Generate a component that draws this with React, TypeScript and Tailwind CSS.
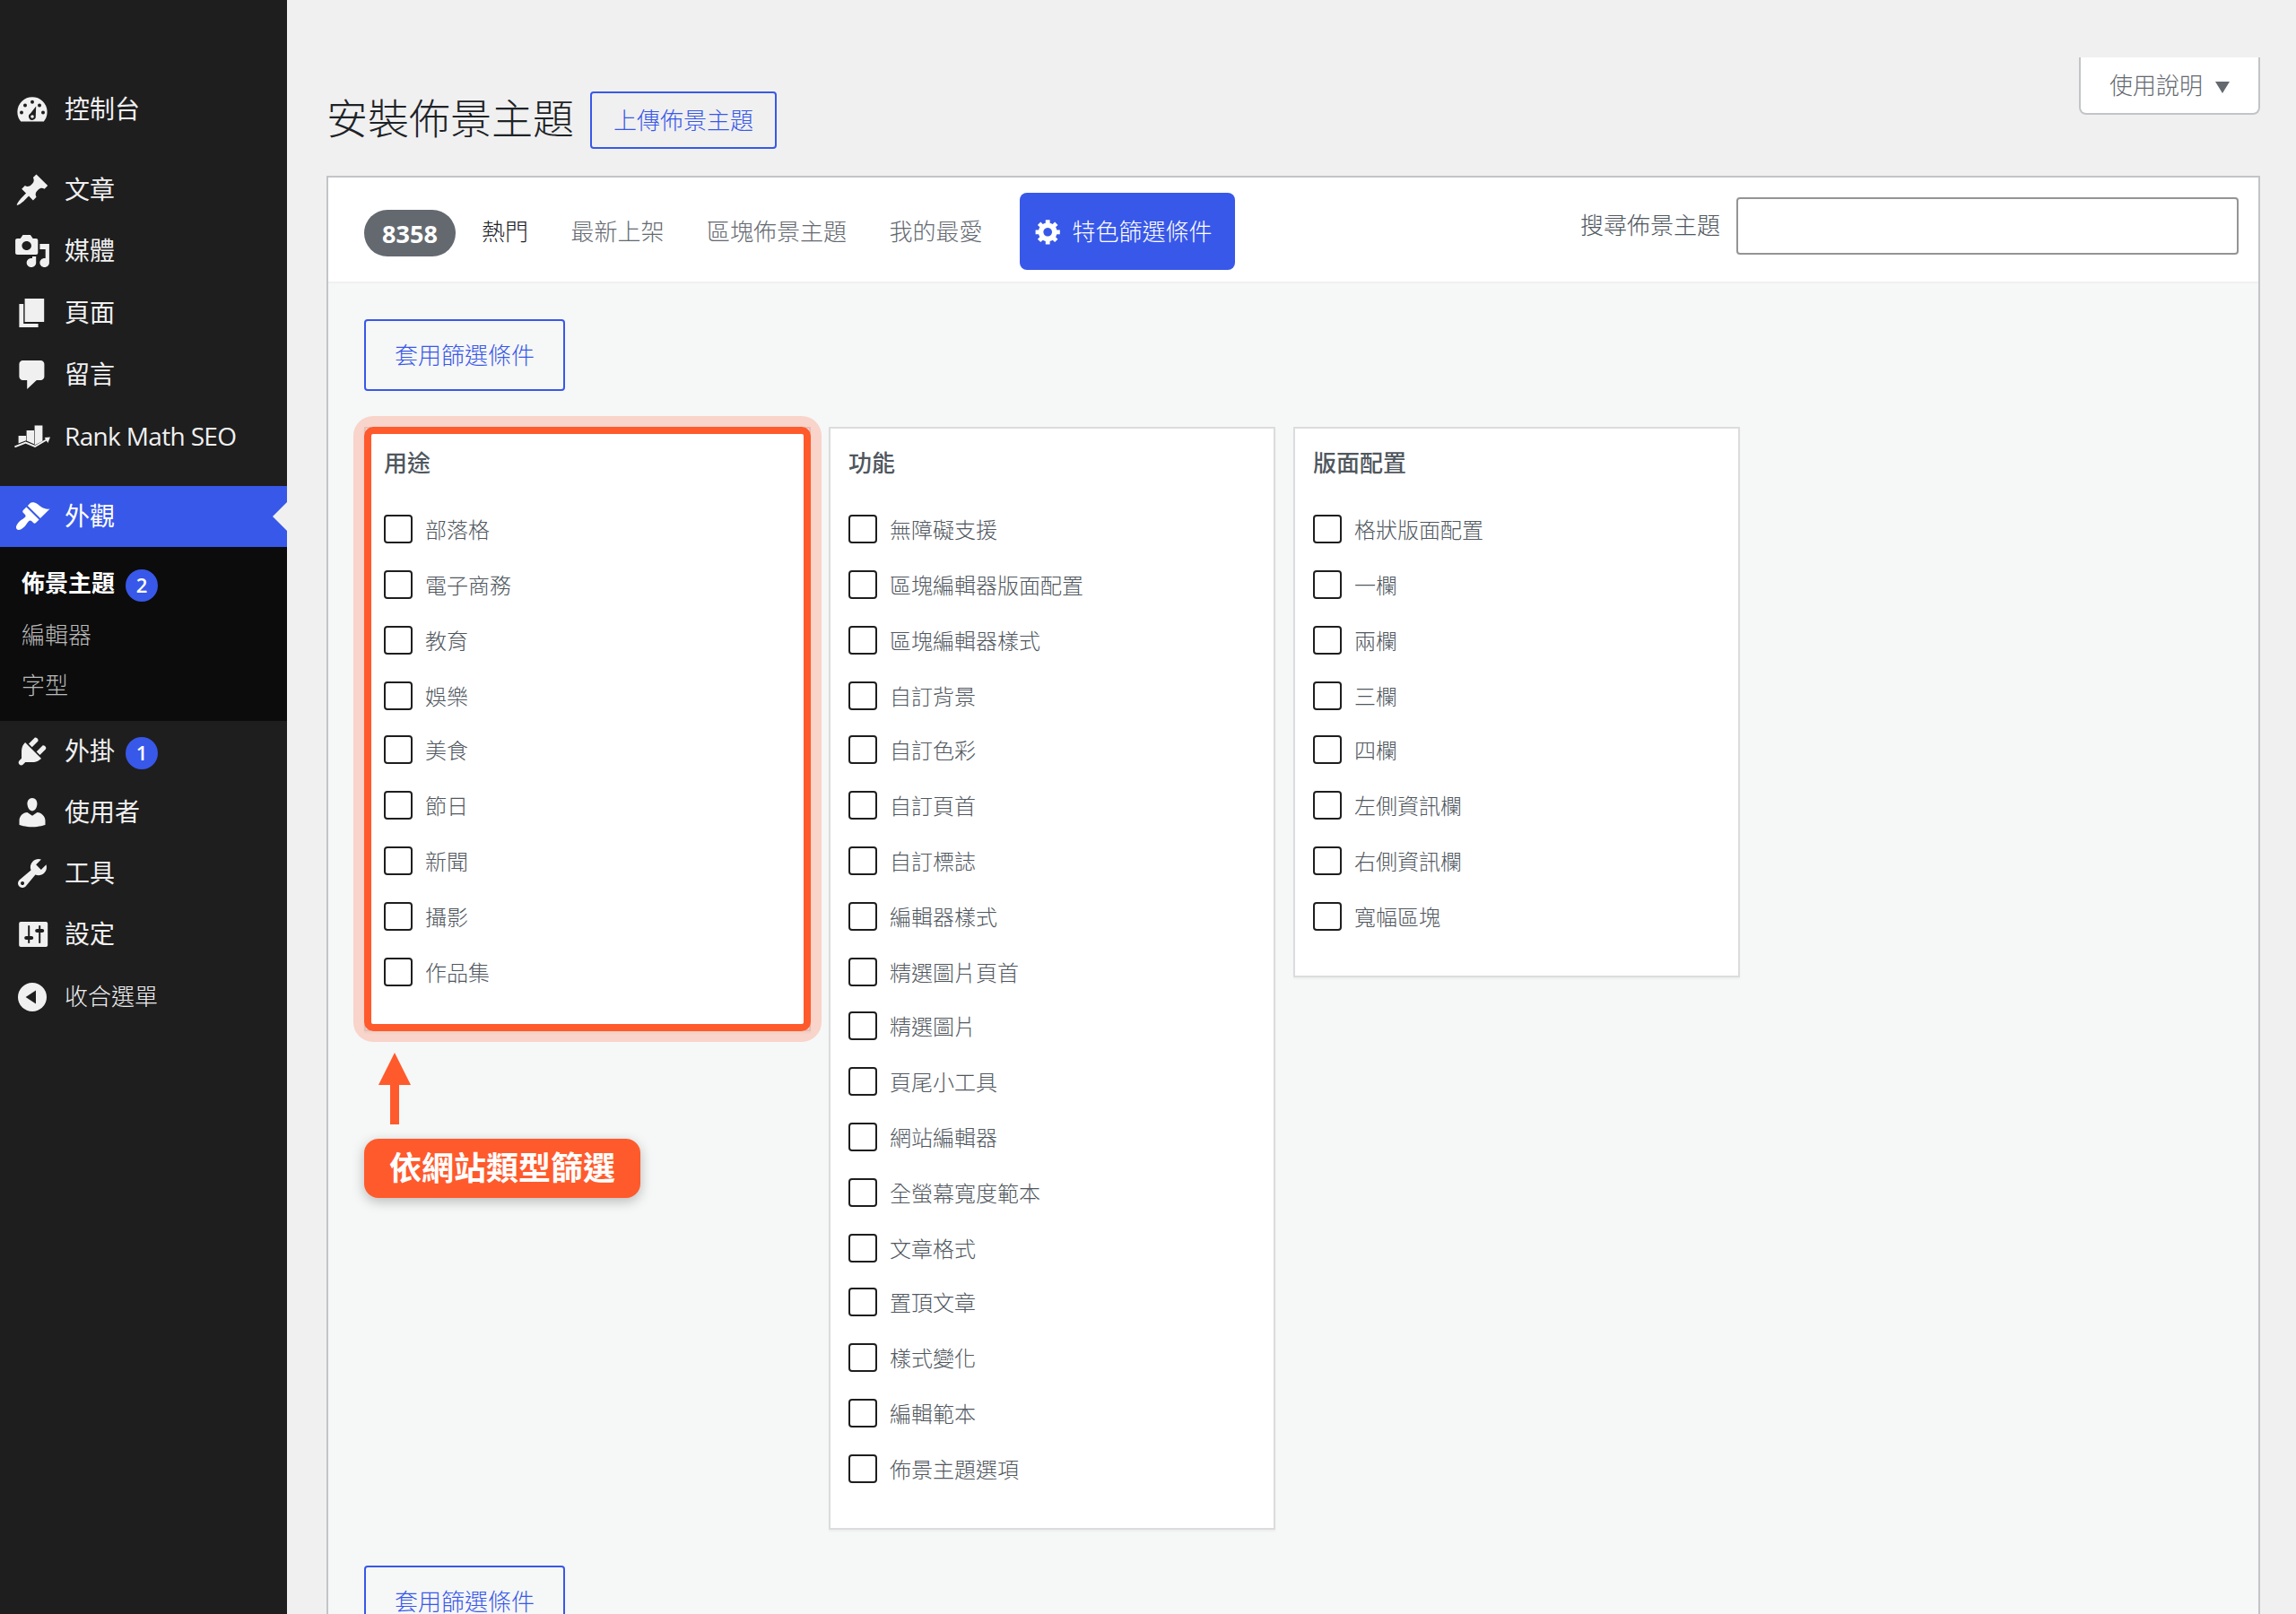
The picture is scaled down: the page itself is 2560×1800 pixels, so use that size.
import React from 'react';

const FONT = "font-['Open_Sans','Noto_Sans_CJK_TC',sans-serif]";

const icons: Record<string, React.ReactNode> = {
  dashboard: (
    <>
      <path d="M3.6 16.8h12.8A8.3 8.3 0 1 0 3.6 16.8z" transform="translate(0 -.1)" />
      <g fill="#1e1e1e">
        <circle cx="10" cy="5.9" r="1" />
        <circle cx="6" cy="7.8" r="1" />
        <circle cx="14" cy="7.8" r="1" />
        <circle cx="4" cy="11.8" r="1" />
        <circle cx="16" cy="11.8" r="1" />
        <path d="M12.1 8.2l-.2 5.6a1.95 1.95 0 1 1-2.9-1.5z" />
      </g>
      <circle cx="10" cy="14" r=".9" />
    </>
  ),
  posts: (
    <path d="M10.44 3.02l1.82-1.82 6.36 6.35-1.83 1.82c-1.05-.68-2.48-.57-3.41.36l-.75.75c-.92.93-1.04 2.35-.35 3.41l-1.83 1.82-2.41-2.41-2.8 2.79c-.42.42-3.38 2.71-3.8 2.29s1.86-3.39 2.28-3.81l2.79-2.79L4.1 9.36l1.83-1.82c1.05.69 2.48.57 3.4-.36l.75-.75c.93-.92 1.05-2.35.36-3.41z" />
  ),
  media: (
    <path
      transform="translate(-.5 0) scale(1.05 1)"
      d="M13 11V4c0-.55-.45-1-1-1h-1.67L9 1H5L3.67 3H2c-.55 0-1 .45-1 1v7c0 .55.45 1 1 1h10c.55 0 1-.45 1-1zM7 4.5c1.38 0 2.5 1.12 2.5 2.5S8.38 9.5 7 9.5 4.5 8.38 4.5 7 5.62 4.5 7 4.5zM14 6h5v10.5c0 1.38-1.12 2.5-2.5 2.5S14 17.88 14 16.5s1.12-2.5 2.5-2.5c.17 0 .34.02.5.05V9h-3V6zm-4 8.05V13h2v3.5c0 1.38-1.12 2.5-2.5 2.5S7 17.88 7 16.5 8.12 14 9.5 14c.17 0 .34.02.5.05z"
    />
  ),
  pages: <path d="M5.8 2h10.8v13H5.8zM2.7 5h2.4v11h8.2v2H2.7z" />,
  comments: (
    <path d="M4.7 2h10c1.1 0 2 .9 2 2v7c0 1.1-.9 2-2 2h-2.3l-5.3 5v-5H4.7c-1.1 0-2-.9-2-2V4c0-1.1.9-2 2-2z" />
  ),
  rankmath: (
    <>
      <path d="M2.3 9.5h4.2v2.6l-4.2 1.6zM6.8 6.5H11v7.6l-4.2-1.9zM11.3 3.7h4.4v8.8l-4.4 2.2z" />
      <path d="M.2 15.7l6.1-2.4 5.2 2.2 6.8-4" fill="none" stroke="currentColor" strokeWidth="1" />
      <path d="M20 10.3l-3.2.2 1.9 3z" />
    </>
  ),
  appearance: (
    <path d="M14.48 11.06L7.41 3.99l1.5-1.5c.5-.56 2.3-.47 3.51.32 1.21.8 1.43 1.28 2.91 2.1 1.18.64 2.45 1.26 4.45.85zm-.71.71L6.7 4.7 4.93 6.47c-.39.39-.39 1.02 0 1.41l1.06 1.06c.39.39.39 1.03 0 1.42-.6.6-1.43 1.11-2.21 1.69-.35.26-.7.53-1.01.84C1.43 14.23.4 16.08 1.4 17.07c.99 1 2.84-.03 4.18-1.36.31-.31.58-.66.85-1.02.57-.78 1.08-1.61 1.69-2.21.39-.39 1.02-.39 1.41 0l1.06 1.06c.39.39 1.02.39 1.41 0z" />
  ),
  plugins: (
    <path d="M13.11 4.36L9.87 7.6 8 5.73l3.24-3.24c.35-.34 1.05-.2 1.56.32.52.51.66 1.21.31 1.55zm-8 1.77l.91-1.12 9.01 9.01-1.19.84c-.71.71-2.63 1.16-3.82 1.16H6.14L4.9 17.26c-.59.59-1.54.59-2.12 0-.59-.58-.59-1.53 0-2.12l1.24-1.24v-3.88c0-1.13.4-3.19 1.09-3.89zm7.26 3.97l3.24-3.24c.34-.35 1.04-.21 1.55.31.52.51.66 1.21.31 1.55l-3.24 3.25z" />
  ),
  users: (
    <path d="M10 9.25c-2.27 0-2.73-3.44-2.73-3.44C7 4.02 7.82 2 9.97 2c2.16 0 2.98 2.02 2.71 3.81 0 0-.41 3.44-2.68 3.44zm0 2.57L12.72 10c2.39 0 4.52 2.33 4.52 4.53v2.49s-3.65 1.13-7.24 1.13c-3.65 0-7.24-1.13-7.24-1.13v-2.49c0-2.25 1.94-4.48 4.47-4.48z" />
  ),
  tools: (
    <path d="M16.68 9.77c-1.34 1.34-3.3 1.67-4.95.99l-5.41 6.52c-.99.99-2.59.99-3.58 0s-.99-2.59 0-3.57l6.52-5.42c-.68-1.65-.35-3.61.99-4.95 1.28-1.28 3.12-1.62 4.72-1.06l-2.89 2.89 2.82 2.82 2.86-2.87c.53 1.58.18 3.39-1.08 4.65zM3.81 16.21c.4.39 1.04.39 1.43 0 .4-.4.4-1.04 0-1.43-.39-.4-1.03-.4-1.43 0-.39.39-.39 1.03 0 1.43z" />
  ),
  settings: (
    <path
      transform="translate(.6 0)"
      d="M18 16V4c0-.55-.45-1-1-1H3c-.55 0-1 .45-1 1v12c0 .55.45 1 1 1h14c.55 0 1-.45 1-1zM8 11h1c.55 0 1 .45 1 1s-.45 1-1 1H8v1.5c0 .28-.22.5-.5.5s-.5-.22-.5-.5V13H6c-.55 0-1-.45-1-1s.45-1 1-1h1V5.5c0-.28.22-.5.5-.5s.5.22.5.5V11zm5-2h-1c-.55 0-1-.45-1-1s.45-1 1-1h1V5.5c0-.28.22-.5.5-.5s.5.22.5.5V7h1c.55 0 1 .45 1 1s-.45 1-1 1h-1v5.5c0 .28-.22.5-.5.5s-.5-.22-.5-.5V9z"
    />
  ),
  collapse: (
    <>
      <circle cx="10" cy="10" r="8" />
      <path d="M12 6.2v7.6L6.3 10z" fill="#1e1e1e" />
    </>
  ),
  gear: (
    <path d="M18 12h-2.18c-.17.7-.44 1.35-.81 1.93l1.54 1.54-2.1 2.1-1.54-1.54c-.58.36-1.23.63-1.91.79V19H8v-2.18c-.68-.16-1.33-.43-1.91-.79l-1.54 1.54-2.12-2.12 1.54-1.54c-.36-.58-.63-1.23-.79-1.91H1V9.03h2.17c.16-.7.44-1.35.8-1.94L2.43 5.55l2.1-2.1 1.54 1.54c.58-.37 1.24-.64 1.93-.81V2h3v2.18c.68.16 1.33.43 1.91.79l1.54-1.54 2.12 2.12-1.54 1.54c.36.59.64 1.24.8 1.94H18V12zm-8.5 1.5c1.66 0 3-1.34 3-3s-1.34-3-3-3-3 1.34-3 3 1.34 3 3 3z" />
  ),
};

const Icon: React.FC<{ name: string; className: string }> = ({ name, className }) => (
  <svg viewBox="0 0 20 20" fill="currentColor" className={`shrink-0 ${className}`}>
    {icons[name]}
  </svg>
);

const Badge: React.FC<{ count: number }> = ({ count }) => (
  <span className="ml-3 mt-1 flex size-9 items-center justify-center rounded-full bg-[#3858e9] pb-0.5 text-[22px] font-semibold leading-none text-white">
    {count}
  </span>
);

interface MenuItemProps {
  icon: string;
  label: string;
  count?: number;
  className?: string;
}

const MenuItem: React.FC<MenuItemProps> = ({ icon, label, count, className = 'h-[68px]' }) => (
  <li className={`flex items-center pl-4 ${className}`}>
    <Icon name={icon} className="size-10 text-[#f0f0f1]" />
    <span className="ml-4 whitespace-nowrap pb-0.5">{label}</span>
    {count && <Badge count={count} />}
  </li>
);

const Sidebar: React.FC = () => (
  <aside className="w-[320px] shrink-0 bg-[#1e1e1e] pt-[88px] text-[28px] leading-9 text-[#f0f0f1]">
    <ul>
      <MenuItem icon="dashboard" label="控制台" />
      <MenuItem icon="posts" label="文章" className="mt-[22px] h-[68px]" />
      <MenuItem icon="media" label="媒體" />
      <MenuItem icon="pages" label="頁面" className="h-[70px]" />
      <MenuItem icon="comments" label="留言" />
      <MenuItem icon="rankmath" label="Rank Math SEO" className="h-[70px] tracking-[-0.65px]" />
      <li className="relative mt-5 flex h-[68px] items-center bg-[#3858e9] pl-4 text-white">
        <Icon name="appearance" className="size-10" />
        <span className="ml-4 pb-0.5">外觀</span>
        <span className="absolute right-0 top-[18px] border-y-[16px] border-r-[16px] border-y-transparent border-r-[#f0f0f0]" />
      </li>
      <li>
        <ul className="h-[194px] bg-[#0c0c0c] pl-6 pt-3 text-[26px] font-light text-[#bbbbbb]">
          <li className="flex h-[58px] items-center font-semibold text-white">
            <span className="pb-0.5">佈景主題</span>
            <Badge count={2} />
          </li>
          <li className="flex h-[56px] items-center">編輯器</li>
          <li className="flex h-[56px] items-center">字型</li>
        </ul>
      </li>
      <MenuItem icon="plugins" label="外掛" count={1} />
      <MenuItem icon="users" label="使用者" />
      <MenuItem icon="tools" label="工具" />
      <MenuItem icon="settings" label="設定" />
      <MenuItem icon="collapse" label="收合選單" className="h-[72px] text-[26px] font-light" />
    </ul>
  </aside>
);

const tabs = ['最新上架', '區塊佈景主題', '我的最愛'];

const purposes = ['部落格', '電子商務', '教育', '娛樂', '美食', '節日', '新聞', '攝影', '作品集'];

const features = [
  '無障礙支援',
  '區塊編輯器版面配置',
  '區塊編輯器樣式',
  '自訂背景',
  '自訂色彩',
  '自訂頁首',
  '自訂標誌',
  '編輯器樣式',
  '精選圖片頁首',
  '精選圖片',
  '頁尾小工具',
  '網站編輯器',
  '全螢幕寬度範本',
  '文章格式',
  '置頂文章',
  '樣式變化',
  '編輯範本',
  '佈景主題選項',
];

const layouts = ['格狀版面配置', '一欄', '兩欄', '三欄', '四欄', '左側資訊欄', '右側資訊欄', '寬幅區塊'];

interface FilterGroupProps {
  title: string;
  items: string[];
  highlighted?: boolean;
}

const FilterGroup: React.FC<FilterGroupProps> = ({ title, items, highlighted }) => (
  <fieldset className="relative w-[498px] border-2 border-[#dcdcde] bg-white pb-5 pl-5 shadow-[0_2px_2px_rgba(0,0,0,0.04)]">
    {highlighted && (
      <div className="absolute -inset-0.5 rounded-[10px] border-8 border-[#ff5a2c] shadow-[0_0_0_12px_rgba(255,90,44,0.22)]" />
    )}
    <h3 className="mt-[19px] h-[77px] text-[26px] font-medium leading-[38px]">{title}</h3>
    <div>
      {items.map((item) => (
        <label key={item} className="flex h-[62px] items-start [&:nth-child(5n-1)]:h-[60px]">
          <input
            type="checkbox"
            className="size-8 shrink-0 appearance-none rounded border-2 border-[#1e1e1e] bg-white"
          />
          <span className="ml-[14px] text-2xl font-light leading-[33px]">{item}</span>
        </label>
      ))}
    </div>
  </fieldset>
);

const ApplyButton: React.FC = () => (
  <button className="block h-20 w-[224px] rounded border-2 border-[#3858e9] text-[26px] font-light leading-8 text-[#3858e9]">
    套用篩選條件
  </button>
);

const App: React.FC = () => (
  <div className={`flex h-[1800px] w-[2560px] overflow-hidden bg-[#f0f0f0] ${FONT}`}>
    <Sidebar />
    <main className="flex-1 pl-11 pr-10">
      <header className="flex h-[196px] items-start justify-between">
        <div className="flex pt-[102px]">
          <h1 className="w-[294px] whitespace-nowrap text-[46px] font-light leading-[59px] text-[#1d2327]">
            安裝佈景主題
          </h1>
          <button className="h-16 w-[208px] rounded border-2 border-[#3858e9] text-[26px] font-light text-[#3858e9]">
            上傳佈景主題
          </button>
        </div>
        <button className="mt-16 flex h-16 w-[202px] items-center rounded-b-lg border-2 border-t-0 border-[#c3c4c7] bg-white pl-8 text-[26px] font-light text-[#646970]">
          使用說明
          <svg viewBox="0 0 16 13" className="ml-[14px] mt-1 h-[13px] w-4" fill="currentColor">
            <path d="M0 0h16L8 13z" />
          </svg>
        </button>
      </header>

      <section className="h-[1700px] border-2 border-[#c3c4c7] bg-[#f6f7f7]">
        <div className="flex h-[118px] items-start justify-between border-b-2 border-[#f0f0f1] bg-white pl-10 pr-[22px] text-[26px] font-light text-[#646970]">
          <div className="flex h-[120px] items-center">
            <span className="mt-1 flex h-[52px] w-[102px] items-center justify-center rounded-[26px] bg-[#646970] text-[27px] font-bold leading-none text-white">
              8358
            </span>
            <span className="ml-[29px] text-[#1d2327]">熱門</span>
            {tabs.map((tab) => (
              <span key={tab} className="ml-[47.5px] whitespace-nowrap">
                {tab}
              </span>
            ))}
            <button className="ml-[41px] flex h-[86px] w-[240px] items-center rounded-lg bg-[#3858e9] pl-4 text-white">
              <Icon name="gear" className="size-8" />
              <span className="ml-[11px] whitespace-nowrap">特色篩選條件</span>
            </button>
          </div>
          <label className="mt-[22px] flex items-center text-[#50575e]">
            <span className="pb-0.5">搜尋佈景主題</span>
            <input className="ml-[18px] h-16 w-[560px] rounded border-2 border-[#949494] bg-white" />
          </label>
        </div>

        <div className="pl-10 pt-10 text-[#50575e]">
          <ApplyButton />
          <div className="mt-10 flex items-start gap-5">
            <div>
              <FilterGroup title="用途" items={purposes} highlighted />
              <svg viewBox="0 0 36 80" className="ml-4 mt-6 h-20 w-9" fill="#ff5a2c">
                <path d="M18 0l18 36H23v44H13V36H0z" />
              </svg>
              <div className="mt-4 flex h-[66px] w-[308px] items-center justify-center rounded-2xl bg-[#ff5a2c] text-4xl font-bold text-white shadow-[0_4px_14px_rgba(0,0,0,0.25)]">
                依網站類型篩選
              </div>
            </div>
            <FilterGroup title="功能" items={features} />
            <FilterGroup title="版面配置" items={layouts} />
          </div>
          <div className="mt-10">
            <ApplyButton />
          </div>
        </div>
      </section>
    </main>
  </div>
);

export default App;
